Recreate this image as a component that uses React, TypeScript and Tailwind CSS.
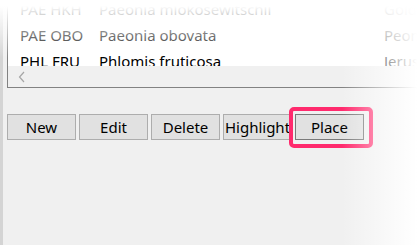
const rows = [
  { code: 'PAE HKH', name: 'Paeonia mlokosewitschii', common: 'Golden peony' },
  { code: 'PAE OBO', name: 'Paeonia obovata', common: 'Peony' },
  { code: 'PHL FRU', name: 'Phlomis fruticosa', common: 'Jerusalem sage' }
]

const buttons = ['New', 'Edit', 'Delete', 'Highlight', 'Place']

export default function App() {
  return (
    <div
      className="relative h-[245px] w-[417px] overflow-hidden bg-[#f0f0f0] text-[#000]"
      style={{ fontFamily: '"Noto Sans", "Open Sans", sans-serif' }}
    >
      <div className="flex h-full border-l-[3px] border-[#d4d4d4] pl-[4px]">
        <div className="flex min-w-0 flex-1 flex-col">
          {/* list view */}
          <div className="mt-[-4px] flex flex-col border-b border-l border-[#828282] bg-white">
            {rows.map((r) => (
              <div key={r.code} className="flex h-[26px] shrink-0 items-center whitespace-nowrap text-[15px] leading-none">
                <span className="w-[91px] shrink-0 pl-[12px]">{r.code}</span>
                <span className="w-[285px] shrink-0">{r.name}</span>
                <span>{r.common}</span>
              </div>
            ))}
            <div className="relative -mt-[8px] flex h-[21px] items-center bg-[#f0f0f0] pl-[10px]">
              <svg width="8" height="12" viewBox="0 0 8 12" fill="none">
                <path d="M6 1 L1.5 6 L6 11" stroke="#a6a6a6" strokeWidth="1.2" />
              </svg>
            </div>
          </div>

          {/* button row */}
          <div className="mt-[26px] flex gap-[3px]">
            {buttons.map((b) => (
              <button
                key={b}
                className={
                  'flex h-[26px] w-[69px] items-center justify-center border bg-[#e1e1e1] text-[15px] leading-none ' +
                  (b === 'Place' ? 'border-[#7a7a7a]' : 'border-[#adadad]')
                }
              >
                {b}
              </button>
            ))}
          </div>
        </div>
      </div>

      {/* callout around Place */}
      <div className="absolute left-[289px] top-[107px] h-[41px] w-[84px] rounded-[5px] border-[4px] border-[#ff2a6d]" />

      {/* fades */}
      <div className="pointer-events-none absolute inset-x-0 top-0 h-[58px] bg-[linear-gradient(to_bottom,#ffffff_6px,rgba(255,255,255,0.88)_12px,rgba(255,255,255,0.5)_34px,rgba(255,255,255,0)_58px)]" />
      <div className="pointer-events-none absolute inset-y-0 right-0 w-[75px] bg-gradient-to-r from-white/0 to-white" />
    </div>
  )
}
